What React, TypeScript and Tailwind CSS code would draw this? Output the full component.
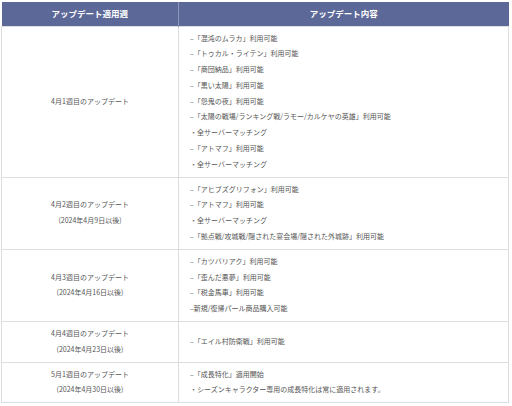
import React from "react";

interface UpdateRow {
  week: string;
  date?: string;
  items: string[];
}

const rows: UpdateRow[] = [
  {
    week: "4月1週目のアップデート",
    items: [
      "–「混沌のムラカ」利用可能",
      "–「トゥカル・ライテン」利用可能",
      "–「商団納品」利用可能",
      "–「黒い太陽」利用可能",
      "–「怨鬼の夜」利用可能",
      "–「太陽の戦場/ランキング戦/ラモー/カルケヤの英雄」利用可能",
      "・全サーバーマッチング",
      "–「アトマフ」利用可能",
      "・全サーバーマッチング",
    ],
  },
  {
    week: "4月2週目のアップデート",
    date: "(2024年4月9日以後)",
    items: [
      "–「アヒブズグリフォン」利用可能",
      "–「アトマフ」利用可能",
      "・全サーバーマッチング",
      "–「拠点戦/攻城戦/隠された宴会場/隠された外城跡」利用可能",
    ],
  },
  {
    week: "4月3週目のアップデート",
    date: "(2024年4月16日以後)",
    items: [
      "–「カツバリアク」利用可能",
      "–「歪んだ悪夢」利用可能",
      "–「税金馬車」利用可能",
      "–新規/復帰パール商品購入可能",
    ],
  },
  {
    week: "4月4週目のアップデート",
    date: "(2024年4月23日以後)",
    items: ["–「エイル村防衛戦」利用可能"],
  },
  {
    week: "5月1週目のアップデート",
    date: "(2024年4月30日以後)",
    items: [
      "–「成長特化」適用開始",
      "・シーズンキャラクター専用の成長特化は常に適用されます。",
    ],
  },
];

export default function App() {
  return (
    <div className="w-[512px] h-[406px] bg-white pt-[2px] pl-[1px] font-['Noto_Sans_CJK_JP','Noto_Sans',sans-serif]">
      <table className="w-[508px] border-collapse table-fixed">
        <thead>
          <tr className="bg-[#5c6898] text-white text-[8.5px] font-bold">
            <th className="w-[177px] h-[24px] border-r border-[#8e97bb] text-center">アップデート適用週</th>
            <th className="h-[24px] text-center">アップデート内容</th>
          </tr>
        </thead>
        <tbody className="text-[7px] leading-[15.8px] text-[#555555]">
          {rows.map((row, i) => (
            <tr key={i} className="border border-[#dedede]">
              <td className="border-r border-[#dedede] text-center align-middle py-[4px]">
                <div>{row.week}</div>
                {row.date && <div>{row.date}</div>}
              </td>
              <td className="pl-[11px] py-[4px] align-middle">
                {row.items.map((item, j) => (
                  <div key={j}>{item}</div>
                ))}
              </td>
            </tr>
          ))}
        </tbody>
      </table>
    </div>
  );
}
